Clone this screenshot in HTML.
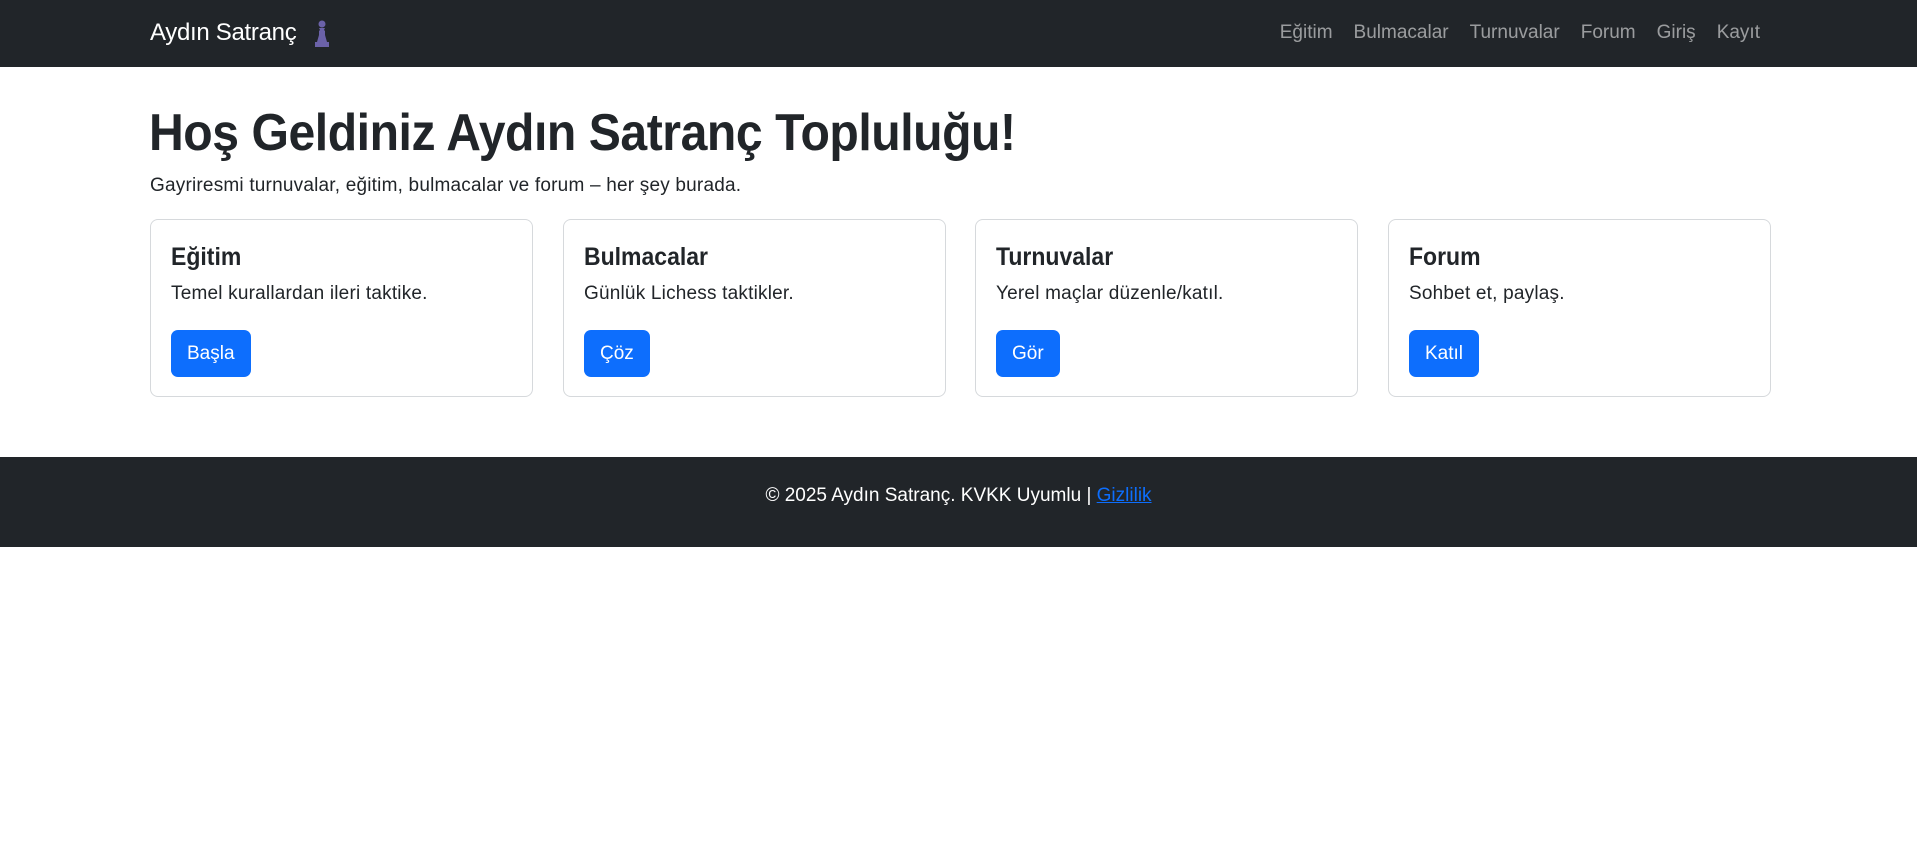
<!DOCTYPE html>
<html><head><meta charset="utf-8"><style>
*{box-sizing:border-box;margin:0;padding:0}
body{width:1917px;height:864px;background:#fff;font-family:"Liberation Sans",sans-serif;color:#212529;position:relative;overflow:hidden}
.nav{position:absolute;left:0;top:0;width:1917px;height:67px;background:#212529}
.brand{position:absolute;left:150px;top:19px;font-size:24px;color:#fff;letter-spacing:-0.3px}
.pawn{position:absolute;left:313px;top:19px}
.links{position:absolute;right:157px;top:22px;font-size:19px;color:rgba(255,255,255,.55);display:flex;gap:21px}
h1{position:absolute;left:149px;top:103px;font-size:52px;font-weight:bold;letter-spacing:-0.5px;color:#212529;transform:scaleX(.926);transform-origin:left}
.sub{position:absolute;left:150px;top:175px;font-size:19px;letter-spacing:0.2px}
.card{position:absolute;top:219px;width:383px;height:178px;border:1px solid #d6d9dc;border-radius:8px}
.card h5{position:absolute;left:20px;top:23px;font-size:25px;font-weight:bold;transform:scaleX(.92);transform-origin:left}
.card p{position:absolute;left:20px;top:63px;font-size:19px;letter-spacing:0.2px}
.btn{position:absolute;left:20px;top:110px;height:47px;padding:0 16px;background:#0d6efd;color:#fff;border-radius:7px;font-size:19px;line-height:47px}
.foot{position:absolute;left:0;top:457px;width:1917px;height:90px;background:#212529;color:#fff;font-size:19px;text-align:center;line-height:78px}
.foot a{color:#0d6efd;text-decoration:underline}
</style></head><body>
<div class="nav">
<div class="brand">Aydın Satranç</div>
<svg class="pawn" width="18" height="30" viewBox="0 0 18 30"><circle cx="9" cy="5" r="3.5" fill="#6b62a8"/><path d="M6 9h6l-1 2 1 1v4l2 7h2v5H2v-5h2l2-7v-4l1-1z" fill="#6b62a8"/></svg>
<div class="links"><span>Eğitim</span><span>Bulmacalar</span><span>Turnuvalar</span><span>Forum</span><span>Giriş</span><span>Kayıt</span></div>
</div>
<h1>Hoş Geldiniz Aydın Satranç Topluluğu!</h1>
<div class="sub">Gayriresmi turnuvalar, eğitim, bulmacalar ve forum – her şey burada.</div>
<div class="card" style="left:150px"><h5>Eğitim</h5><p>Temel kurallardan ileri taktike.</p><span class="btn">Başla</span></div>
<div class="card" style="left:563px"><h5>Bulmacalar</h5><p>Günlük Lichess taktikler.</p><span class="btn">Çöz</span></div>
<div class="card" style="left:975px"><h5>Turnuvalar</h5><p>Yerel maçlar düzenle/katıl.</p><span class="btn">Gör</span></div>
<div class="card" style="left:1388px"><h5>Forum</h5><p>Sohbet et, paylaş.</p><span class="btn">Katıl</span></div>
<div class="foot">© 2025 Aydın Satranç. KVKK Uyumlu | <a>Gizlilik</a></div>
</body></html>
